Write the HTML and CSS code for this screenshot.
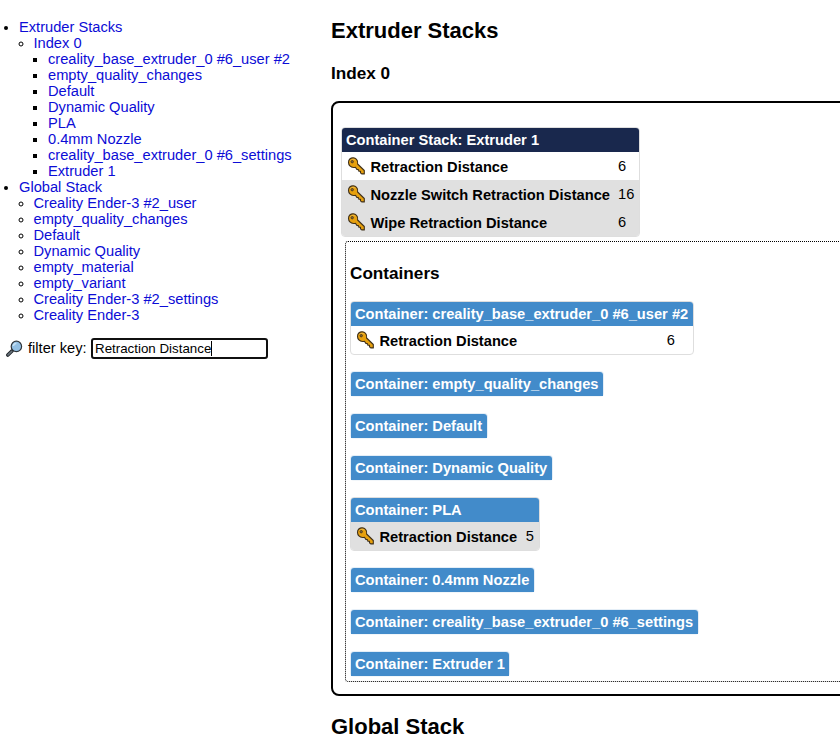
FILE: index.html
```html
<!DOCTYPE html>
<html lang="en">
<head>
<meta charset="utf-8">
<title>Stacks</title>
<link rel="stylesheet" href="styles.css">
</head>
<body>
<svg class="defs" width="0" height="0" aria-hidden="true">
<symbol id="key" viewBox="0 0 18 18">
<path d="M2.3 2C4.2.3 7.3.5 9 2.3c1.3 1.4 1.6 3 1.1 4.7l6.7 6.5v3.4h-2.6l-1.2-1.1v-1.5h-1.6l-.5-1.7-1.5-.2-1.5-2.1c-2.1.5-4.1.1-5.5-1.4C.6 6.9.5 3.8 2.3 2z" fill="#e6a00e" stroke="#3f301b" stroke-width="1.1" stroke-linejoin="round"/>
<path d="M3 4.1C4.2 1.9 6.5 1.7 8 3.2" fill="none" stroke="#f3c04a" stroke-width=".8"/>
<circle cx="4.7" cy="4.7" r="1.2" fill="#8a6a35" stroke="#3f301b" stroke-width=".8"/>
</symbol>
</svg>
<div class="page">
<aside class="menu">
<ul class="tree">
<li><a>Extruder Stacks</a>
<ul>
<li><a>Index 0</a>
<ul>
<li><a>creality_base_extruder_0 #6_user #2</a></li>
<li><a>empty_quality_changes</a></li>
<li><a>Default</a></li>
<li><a>Dynamic Quality</a></li>
<li><a>PLA</a></li>
<li><a>0.4mm Nozzle</a></li>
<li><a>creality_base_extruder_0 #6_settings</a></li>
<li><a>Extruder 1</a></li>
</ul>
</li>
</ul>
</li>
<li><a>Global Stack</a>
<ul>
<li><a>Creality Ender-3 #2_user</a></li>
<li><a>empty_quality_changes</a></li>
<li><a>Default</a></li>
<li><a>Dynamic Quality</a></li>
<li><a>empty_material</a></li>
<li><a>empty_variant</a></li>
<li><a>Creality Ender-3 #2_settings</a></li>
<li><a>Creality Ender-3</a></li>
</ul>
</li>
</ul>
<div class="filter">
<svg class="lens" viewBox="0 0 18 18"><path d="M7.2 10.8L2.8 15" stroke="#20262b" stroke-width="3.6" stroke-linecap="round"/><path d="M6.7 11.3L3 14.8" stroke="#69737b" stroke-width="1.7" stroke-linecap="round"/><circle cx="11.4" cy="6.4" r="5.2" fill="#93c0e4" stroke="#30373d" stroke-width="1.2"/><path d="M8.4 6a3 3 0 0 1 3-2.6" fill="none" stroke="#c9e3f6" stroke-width="1.5"/></svg>
<span class="filter-label">filter key:</span>
<div class="field"><span>Retraction Distance</span><i class="caret"></i></div>
</div>
</aside>
<main class="content">
<h2>Extruder Stacks</h2>
<h3>Index 0</h3>
<section class="stack">
<div class="card stack-card">
<div class="head">Container Stack: Extruder 1</div>
<div class="row"><svg class="key"><use href="#key"/></svg><b>Retraction Distance</b><span>6</span></div>
<div class="row shaded"><svg class="key"><use href="#key"/></svg><b>Nozzle Switch Retraction Distance</b><span>16</span></div>
<div class="row shaded"><svg class="key"><use href="#key"/></svg><b>Wipe Retraction Distance</b><span>6</span></div>
</div>
<div class="containers">
<h3>Containers</h3>
<div class="card user"><div class="head">Container: creality_base_extruder_0 #6_user #2</div>
<div class="row"><svg class="key"><use href="#key"/></svg><b>Retraction Distance</b><span>6</span></div></div>
<div class="card empty"><div class="head">Container: empty_quality_changes</div></div>
<div class="card empty"><div class="head">Container: Default</div></div>
<div class="card empty"><div class="head">Container: Dynamic Quality</div></div>
<div class="card pla"><div class="head">Container: PLA</div>
<div class="row shaded"><svg class="key"><use href="#key"/></svg><b>Retraction Distance</b><span>5</span></div></div>
<div class="card empty"><div class="head">Container: 0.4mm Nozzle</div></div>
<div class="card empty"><div class="head">Container: creality_base_extruder_0 #6_settings</div></div>
<div class="card empty"><div class="head">Container: Extruder 1</div></div>
</div>
</section>
<h2>Global Stack</h2>
</main>
</div>
</body>
</html>
```
FILE: styles.css
```css
* { box-sizing: border-box; }
html, body { margin: 0; height: 744px; overflow: hidden; }
body { font: 14.667px/16px "Liberation Sans", Arial, sans-serif; color: #000; background: #fff; }
.defs { display: block; height: 0; }
.page { display: grid; grid-template-columns: 331px 540px; }
.menu { padding-top: 19px; white-space: nowrap; }
ul { margin: 0; padding: 0 0 0 14.5px; }
.tree { padding-left: 19px; }
a { color: #0c0cd6; }
.filter { display: flex; align-items: center; height: 21px; margin-top: 15px; padding-left: 5px; }
.lens { width: 18px; height: 18px; margin-right: 5px; }
.filter-label { width: 63px; margin-top: -2px; }
.field { display: flex; align-items: center; width: 177px; height: 21px; padding-left: 2px; border: 2px solid #101010; border-radius: 3px; font-size: 13.33px; }
.caret { width: 1px; height: 15px; background: #000; }
h2, h3 { margin: 0; font-weight: bold; white-space: nowrap; }
h2 { height: 26px; font-size: 22px; line-height: 26px; }
h3 { height: 20px; font-size: 17.16px; line-height: 20px; }
.content { padding-top: 18px; }
.content > h3 { margin-top: 19px; }
.stack { height: 595px; margin: 18px 0 18px; padding: 24px 8px 0; border: 2px solid #000; border-radius: 8px; }
.card { width: fit-content; border: 1px solid #dedede; border-radius: 4px; white-space: nowrap; }
.empty { border-color: #e4eef7 #e4eef7 #f1f6fa; }
.head { height: 24px; padding: 0 4.6px 0 4px; line-height: 24px; font-weight: bold; color: #fff; background: #428bca; border-radius: 3px 3px 0 0; }
.row { display: flex; align-items: center; height: 28px; padding-left: 4.5px; }
.row:last-child { border-radius: 0 0 3px 3px; }
.shaded { background: #e0e0e0; }
.key { width: 19px; height: 18px; margin-right: 5px; flex: none; }
.row b { padding-top: 2px; }
.row span { margin-left: auto; }
.stack-card { width: 299px; }
.stack-card .head { background: #19284d; }
.stack-card .row span { width: 21px; }
.containers { height: 441px; margin: 4px 0 0 4px; padding: 21px 4px 0; border: 1px dotted #000; border-radius: 3px; }
.containers .card { margin-bottom: 16px; }
.containers h3 { margin-bottom: 18px; }
.containers .row { height: 28px; padding-bottom: 1px; }
.user .row { padding-right: 18px; }
.pla { width: 190px; }
.pla .row { padding-right: 5px; }
```
